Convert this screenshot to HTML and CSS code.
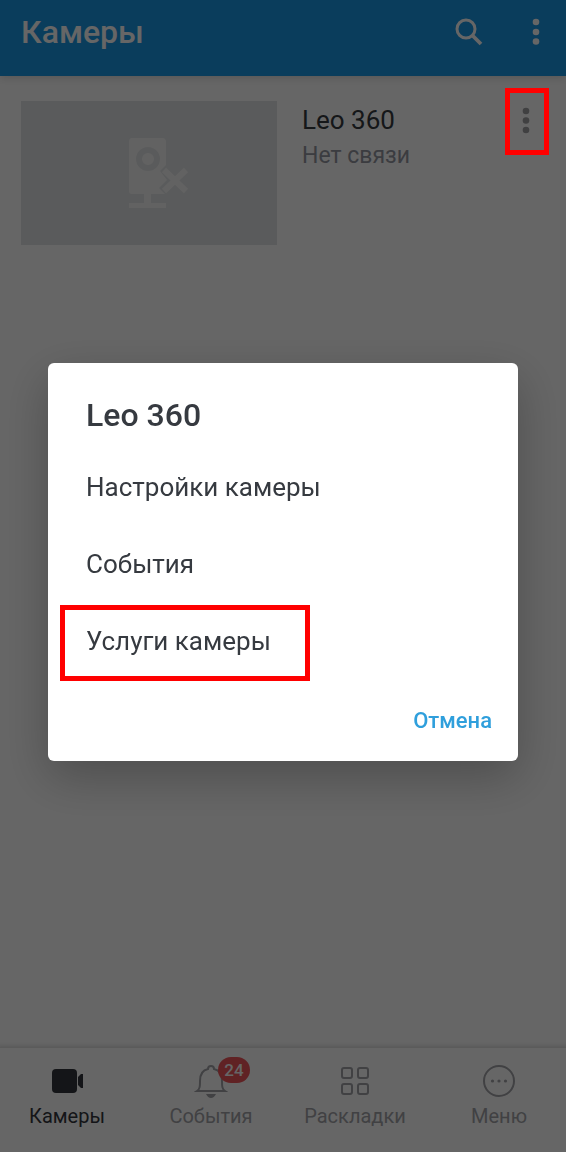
FILE: index.html
```html
<!DOCTYPE html>
<html lang="ru">

<head>
    <meta charset="UTF-8">
    <meta name="viewport" content="width=device-width, initial-scale=1">
    <title>Камеры</title>
    <link rel="stylesheet" href="styles.css">
</head>

<body>
    <div class="app">
        <header class="topbar">
            <h1>Камеры</h1>
            <button class="icon-btn" aria-label="Поиск">
                <svg width="30" height="30" viewBox="0 0 30 30" fill="none" stroke="currentColor">
                    <circle cx="12" cy="12" r="9" stroke-width="3" />
                    <path d="M18.5 18.5L27 27" stroke-width="3.8" />
                </svg>
            </button>
            <button class="icon-btn" aria-label="Ещё">
                <svg width="8" height="30" viewBox="0 0 8 30" fill="currentColor">
                    <circle cx="4" cy="5" r="3.3" />
                    <circle cx="4" cy="15" r="3.3" />
                    <circle cx="4" cy="24.5" r="3.3" />
                </svg>
            </button>
        </header>

        <main class="list">
            <article class="camera">
                <div class="thumb">
                    <svg width="82" height="70" viewBox="-20 0 82 70" fill="currentColor">
                        <path d="M4 0H34Q38 0 38 4V27L32 33L39 42L31 50L37 56H23V65H38V70H1V65H16V56H4Q1 56 1 53V4Q1 0 4 0Z" />
                        <circle class="lens" cx="20" cy="21" r="9" fill="none" stroke-width="6" />
                        <path d="M36 32L58 53M58 32L36 53" fill="none" stroke="currentColor" stroke-width="6" />
                    </svg>
                </div>
                <div class="info">
                    <h2>Leo 360</h2>
                    <p>Нет связи</p>
                </div>
                <button class="more" aria-label="Действия с камерой">
                    <svg width="8" height="30" viewBox="0 0 8 30" fill="currentColor">
                        <circle cx="4" cy="5" r="3.3" />
                        <circle cx="4" cy="14.5" r="3.3" />
                        <circle cx="4" cy="24" r="3.3" />
                    </svg>
                    <span class="mark"></span>
                </button>
            </article>
        </main>

        <nav class="tabs">
            <a href="#cameras" class="tab active">
                <span class="tab-icon">
                    <svg width="34" height="34" viewBox="0 0 34 34" fill="currentColor">
                        <rect x="2" y="5" width="25" height="24" rx="4" />
                        <path d="M28 13L31 10H33V24H31L28 21Z" />
                    </svg>
                </span>
                Камеры
            </a>
            <a href="#events" class="tab">
                <span class="tab-icon">
                    <svg width="34" height="34" viewBox="0 0 34 34" fill="none" stroke="currentColor" stroke-width="2">
                        <path d="M3 27C6 25 6 22 6 17C6 10 9 6 14 5C14 1 20 1 20 5C25 6 28 10 28 17C28 22 28 25 31 27Z" />
                        <path d="M12 30H22Q20 34 17 34Q14 34 12 30Z" fill="currentColor" stroke="none" />
                    </svg>
                    <span class="badge">24</span>
                </span>
                События
            </a>
            <a href="#layouts" class="tab">
                <span class="tab-icon">
                    <svg width="34" height="34" viewBox="0 0 34 34" fill="none" stroke="currentColor" stroke-width="2">
                        <rect x="4" y="4" width="10" height="10" rx="2" />
                        <rect x="20" y="4" width="10" height="10" rx="2" />
                        <rect x="4" y="20" width="10" height="10" rx="2" />
                        <rect x="20" y="20" width="10" height="10" rx="2" />
                    </svg>
                </span>
                Раскладки
            </a>
            <a href="#menu" class="tab">
                <span class="tab-icon">
                    <svg width="34" height="34" viewBox="0 0 34 34" fill="currentColor">
                        <circle cx="17" cy="17" r="15" fill="none" stroke="currentColor" stroke-width="2" />
                        <circle cx="10.5" cy="17" r="1.6" />
                        <circle cx="17" cy="17" r="1.6" />
                        <circle cx="23.5" cy="17" r="1.6" />
                    </svg>
                </span>
                Меню
            </a>
        </nav>
    </div>

    <div class="overlay">
        <div class="dialog" role="dialog" aria-labelledby="dialog-title">
            <h2 id="dialog-title">Leo 360</h2>
            <button class="option">Настройки камеры</button>
            <button class="option">События</button>
            <button class="option marked">Услуги камеры</button>
            <button class="cancel">Отмена</button>
        </div>
    </div>
</body>

</html>
```
FILE: styles.css
```css
*,
*::after {
    box-sizing: border-box;
}

body {
    margin: 0;
    font-family: Roboto, "Liberation Sans", sans-serif;
    background: #fff;
    color: #363a40;
}

h1,
h2,
p {
    margin: 0;
}

button {
    border: 0;
    padding: 0;
    background: none;
    font: inherit;
    color: inherit;
    cursor: pointer;
}

svg {
    display: block;
}

.app {
    min-height: 100vh;
    display: flex;
    flex-direction: column;
    overflow: hidden;
}

/* top bar */
.topbar {
    display: flex;
    align-items: center;
    gap: 48px;
    height: 76px;
    padding: 0 26px 13px 21px;
    background: #1b98e6;
    color: #fff;
    box-shadow: 0 2px 8px rgba(0, 0, 0, 0.15);
}

.topbar h1 {
    flex: 1;
    font-size: 32px;
    line-height: 40px;
    font-weight: 500;
}

/* camera list */
.list {
    flex: 1;
    padding: 25px 21px;
}

.camera {
    display: flex;
    align-items: flex-start;
}

.thumb {
    display: flex;
    align-items: center;
    justify-content: center;
    width: 256px;
    height: 144px;
    margin-right: 25px;
    background: #e2e4e6;
    color: #f6f6f6;
}

.lens {
    stroke: #e2e4e6;
}

.info {
    flex: 1;
}

.info h2 {
    font-size: 26px;
    line-height: 38px;
    font-weight: 400;
}

.info p {
    font-size: 23px;
    line-height: 34px;
    color: #9496a0;
}

.more {
    position: relative;
    padding: 5px 15px;
    color: #a0a0a4;
}

/* red frames sit above the dimmed screen */
.mark,
.marked::after {
    content: "";
    position: absolute;
    border: 5px solid #f00;
    z-index: 20;
}

.mark {
    top: -13px;
    left: -2px;
    width: 44px;
    height: 67px;
}

/* bottom tabs */
.tabs {
    display: grid;
    grid-template-columns: repeat(4, 1fr);
    height: 104px;
    margin: 0 -5px;
    padding-top: 16px;
    background: #fff;
    box-shadow: 0 -1px 6px rgba(0, 0, 0, 0.2);
}

.tab {
    display: flex;
    flex-direction: column;
    align-items: center;
    gap: 6px;
    font-size: 20px;
    line-height: 24px;
    color: #a2a3a8;
    text-decoration: none;
}

.tab.active {
    color: #33363c;
}

.tab-icon {
    position: relative;
}

.badge {
    position: absolute;
    top: -7px;
    left: 24px;
    width: 32px;
    border-radius: 13px;
    background: #f0555a;
    color: #fff;
    font-size: 17px;
    line-height: 26px;
    font-weight: 500;
    text-align: center;
}

/* dialog */
.overlay {
    position: fixed;
    inset: 0;
    z-index: 10;
    display: flex;
    align-items: center;
    justify-content: center;
    padding: 0 48px 28px;
    background: rgba(0, 0, 0, 0.6);
}

.dialog {
    display: flex;
    flex-direction: column;
    align-items: flex-start;
    width: 100%;
    max-width: 560px;
    padding: 32px 26px 16px 38px;
    border-radius: 6px;
    background: #fff;
    box-shadow: 0 16px 48px rgba(0, 0, 0, 0.25);
}

.dialog h2 {
    margin-bottom: 14px;
    font-size: 32px;
    line-height: 40px;
    font-weight: 500;
}

.option {
    position: relative;
    width: 100%;
    font-size: 26px;
    line-height: 77px;
    text-align: left;
}

.marked::after {
    top: 2px;
    left: -26px;
    width: 250px;
    height: 76px;
}

.cancel {
    align-self: flex-end;
    margin-top: 17px;
    font-size: 22px;
    line-height: 48px;
    font-weight: 500;
    color: #2f9fdc;
}
```
